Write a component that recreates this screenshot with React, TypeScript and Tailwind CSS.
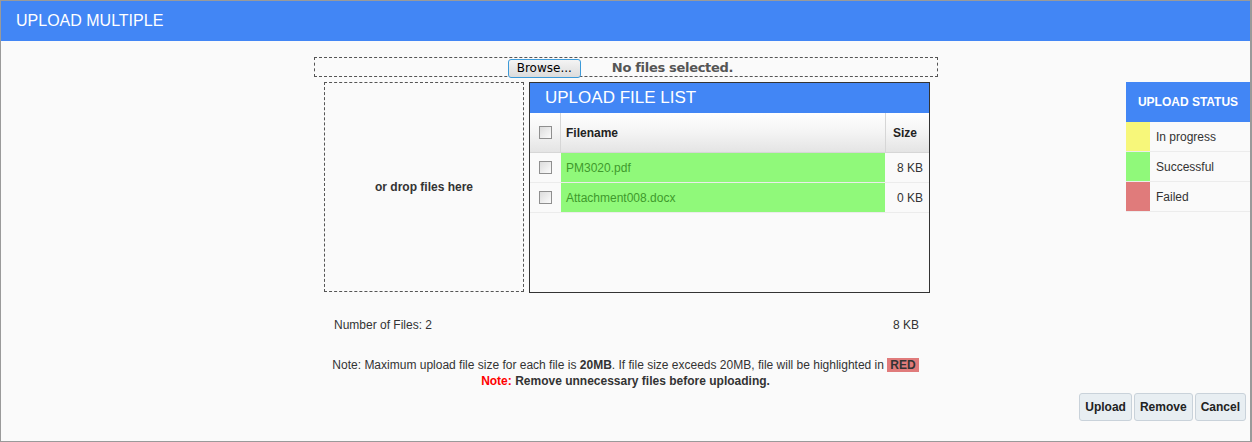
const files = [
  { name: 'PM3020.pdf', size: '8 KB' },
  { name: 'Attachment008.docx', size: '0 KB' },
]

const legend = [
  { label: 'In progress', color: 'bg-[#f7f77a]' },
  { label: 'Successful', color: 'bg-[#90f97a]' },
  { label: 'Failed', color: 'bg-[#e07b7b]' },
]

const Check = () => (
  <span className="block w-[13px] h-[13px] border border-[#8f8f8f] bg-gradient-to-br from-[#dcdcdc] to-[#fbfbfb]" />
)

const App = () => {
  return (
    <div className="w-[1252px] h-[442px] bg-[#fafafa] border border-[#9a9a9a] border-r-2 flex flex-col font-['Liberation_Sans',Arial,sans-serif] text-[12px] text-[#333]">
      <header className="h-[40px] shrink-0 bg-[#4286f5] flex items-center px-[15px]">
        <h1 className="text-white text-[16px]">UPLOAD MULTIPLE</h1>
      </header>

      <div className="grid grid-cols-[1fr_625px_1fr] flex-1">
        <div />
        <div className="flex flex-col pt-[16px]">
          <div className="h-[20px] ml-[1px] border border-dashed border-[#555] flex items-center justify-center gap-[31px] pr-[11px]">
            <button className="h-[19px] w-[73px] mt-[2px] border border-[#3c9ad8] rounded-[3px] bg-gradient-to-b from-[#f4f4f4] to-[#dcdcdc] text-[12px] text-black font-['DejaVu_Sans',sans-serif] leading-none">
              Browse...
            </button>
            <span className="font-bold text-[13px] text-[#555] mt-[2px] font-['DejaVu_Sans',sans-serif] tracking-[-0.3px]">
              No files selected.
            </span>
          </div>

          <div className="flex gap-[5px] mt-[5px] pl-[11px]">
            <div className="w-[200px] h-[210px] border border-dashed border-[#555] flex items-center justify-center font-bold">
              or drop files here
            </div>
            <div className="w-[401px] h-[211px] border border-[#333] flex flex-col">
              <div className="h-[30px] bg-[#4286f5] flex items-center px-[15px] text-white text-[17px]">
                UPLOAD FILE LIST
              </div>
              <div className="h-[40px] flex bg-gradient-to-b from-white via-[#f4f4f4] to-[#e4e4e4] border-b border-[#d6d6d6] font-bold text-[#222]">
                <div className="w-[31px] flex items-center justify-center border-r border-[#d6d6d6]">
                  <Check />
                </div>
                <div className="flex-1 flex items-center px-[5px] border-r border-[#d6d6d6]">Filename</div>
                <div className="w-[43px] flex items-center px-[7px]">Size</div>
              </div>
              {files.map((f) => (
                <div key={f.name} className="h-[30px] flex border-b border-[#ececec]">
                  <div className="w-[31px] flex items-center justify-center">
                    <Check />
                  </div>
                  <div className="flex-1 flex items-center px-[5px] bg-[#90f97a] text-[#3f9a2c]">{f.name}</div>
                  <div className="w-[44px] flex items-center justify-end pr-[6px]">{f.size}</div>
                </div>
              ))}
            </div>
          </div>

          <div className="flex justify-between pl-[21px] pr-[19px] mt-[23px]">
            <span>Number of Files: 2</span>
            <span>8 KB</span>
          </div>

          <div className="mt-[23px] text-center leading-[16px]">
            <p>
              Note: Maximum upload file size for each file is <b>20MB</b>. If file size exceeds 20MB, file will be highlighted in{' '}
              <b className="bg-[#e07b7b] px-[3px]">RED</b>
            </p>
            <p className="font-bold">
              <span className="text-[#f00]">Note:</span> Remove unnecessary files before uploading.
            </p>
          </div>
        </div>

        <div className="flex flex-col items-end pt-[41px]">
          <div className="w-[124px]">
            <div className="h-[40px] bg-[#4286f5] text-white font-bold text-[12px] flex items-center justify-center">
              UPLOAD STATUS
            </div>
            {legend.map((l) => (
              <div key={l.label} className="h-[30px] flex border-b border-[#ececec]">
                <div className={'w-[24px] ' + l.color} />
                <div className="flex items-center pl-[6px]">{l.label}</div>
              </div>
            ))}
          </div>
          <div className="flex-1" />
          <div className="flex gap-[2px] pr-[4px] pb-[20px]">
            {['Upload', 'Remove', 'Cancel'].map((b) => (
              <button
                key={b}
                className="h-[28px] px-[5px] border border-[#c9d2da] rounded-[3px] bg-[#e8eef2] font-bold text-[12px] text-[#222]"
              >
                {b}
              </button>
            ))}
          </div>
        </div>
      </div>
    </div>
  )
}

export default App
